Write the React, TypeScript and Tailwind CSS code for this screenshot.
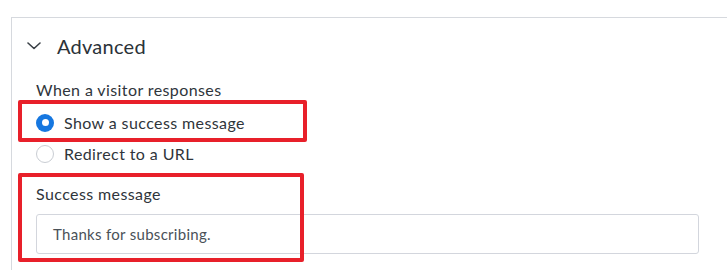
import React from "react";

function Radio({ checked }: { checked?: boolean }) {
  if (checked) {
    return (
      <span className="flex items-center justify-center w-[18px] h-[18px] rounded-full bg-[#1677e0]">
        <span className="w-[7px] h-[7px] rounded-full bg-white" />
      </span>
    );
  }
  return <span className="block w-[18px] h-[18px] rounded-full border border-[#c9cdd3] bg-white" />;
}

export default function App() {
  return (
    <div className="relative w-[727px] h-[270px] overflow-hidden bg-white pl-[11px] pt-[17px] font-['Lato',sans-serif] text-[#2f353b]">
      <div className="h-[300px] border-l border-t border-[#d6d9de]">
        {/* header */}
        <div className="flex items-center h-[56px] pl-[15px] gap-[16px]">
          <svg width="14" height="8" viewBox="0 0 14 8" fill="none">
            <path d="M1 1l6 5.5L13 1" stroke="#3a4046" strokeWidth="1.6" strokeLinecap="round" strokeLinejoin="round" />
          </svg>
          <span className="text-[20px] leading-[28px] tracking-[0.25px] text-[#2b3238]">Advanced</span>
        </div>

        <div className="pl-[24px] pr-[27px] tracking-[0.4px]">
          <div className="mt-[4px] text-[16px] leading-[24px]">When a visitor responses</div>

          <div className="mt-[5px] flex items-center h-[31px] gap-[10px]">
            <Radio checked />
            <span className="text-[16px]">Show a success message</span>
          </div>
          <div className="flex items-center h-[31px] gap-[10px]">
            <Radio />
            <span className="text-[16px]">Redirect to a URL</span>
          </div>

          <div className="mt-[13px] text-[16px] leading-[24px]">Success message</div>
          <div className="mt-[8px] flex items-center w-[663px] h-[40px] border border-[#d3d6dd] rounded-[3px] pl-[16px] text-[15px] tracking-[0.3px] text-[#4a5158]">
            Thanks for subscribing.
          </div>
        </div>
      </div>

      {/* annotation boxes */}
      <div className="absolute left-[18px] top-[100px] w-[289px] h-[42px] border-4 border-[#e8202a] rounded-[2px]" />
      <div className="absolute left-[18px] top-[173px] w-[286px] h-[89px] border-4 border-[#e8202a] rounded-[2px]" />
    </div>
  );
}
